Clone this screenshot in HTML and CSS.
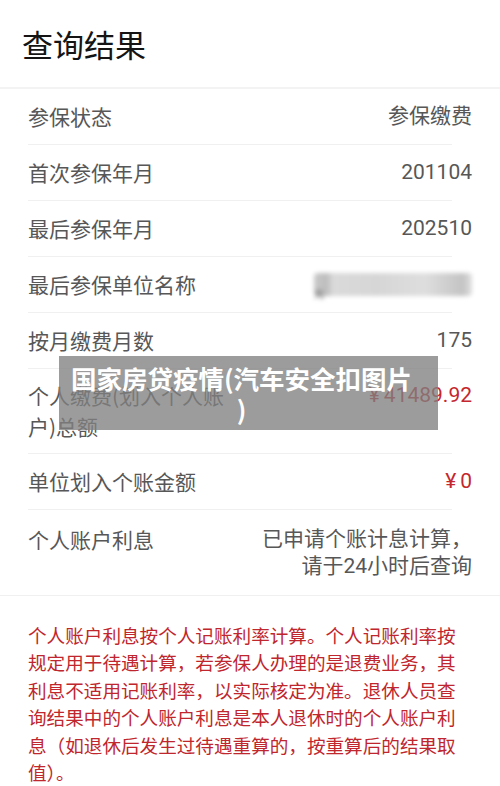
FILE: index.html
```html
<!DOCTYPE html>
<html lang="zh-CN">
<head>
    <meta charset="UTF-8">
    <meta name="viewport" content="width=device-width, initial-scale=1.0">
    <title>查询结果</title>
    <link rel="stylesheet" href="styles.css">
</head>
<body>

    <!-- header -->
    <div class="head">
        <p class="title">查询结果</p>
    </div>

    <!-- result rows -->
    <div class="list">
        <div class="row">
            <span class="label">参保状态</span>
            <span class="value">参保缴费</span>
        </div>
        <div class="row">
            <span class="label">首次参保年月</span>
            <span class="value">201104</span>
        </div>
        <div class="row">
            <span class="label">最后参保年月</span>
            <span class="value">202510</span>
        </div>
        <div class="row">
            <span class="label">最后参保单位名称</span>
            <span class="value"><span class="blur"><span class="blur-ch">元</span></span></span>
        </div>
        <div class="row">
            <span class="label">按月缴费月数</span>
            <span class="value">175</span>
        </div>
        <div class="row tall">
            <span class="label narrow">个人缴费(划入个人账户)总额</span>
            <span class="value red"><span class="yen">¥</span>41489.92</span>
        </div>
        <div class="row">
            <span class="label">单位划入个账金额</span>
            <span class="value red"><span class="yen">¥</span>0</span>
        </div>
        <div class="row last">
            <span class="label">个人账户利息</span>
            <span class="value multi">已申请个账计息计算，请于24小时后查询</span>
        </div>
    </div>

    <!-- note -->
    <div class="note">
        <p>个人账户利息按个人记账利率计算。个人记账利率按规定用于待遇计算，若参保人办理的是退费业务，其利息不适用记账利率，以实际核定为准。退休人员查询结果中的个人账户利息是本人退休时的个人账户利息（如退休后发生过待遇重算的，按重算后的结果取值）。</p>
    </div>

    <!-- caption over the picture -->
    <div class="caption">国家房贷疫情(汽车安全扣图片)</div>

</body>
</html>
```

FILE: styles.css
```css
body{
  margin: 0;
  background-color: #fff;
  font-family: Roboto, "Noto Sans CJK SC", sans-serif;
  position: relative;
}

p{
  margin: 0;
}

.head{
  height: 87px;
  display: flex;
  align-items: center;
  padding-left: 22px;
  border-bottom: 2px solid #f3f3f3;
}

.title{
  font-family: "Noto Sans CJK SC", sans-serif;
  font-size: 31px;
  color: #141414;
  line-height: 1;
}

.list{
  padding: 0 48px 0 28px;
  border-bottom: 1px solid #f0f0f0;
}

.row{
  display: flex;
  justify-content: space-between;
  align-items: flex-start;
  padding: 12px 0;
  border-bottom: 1px solid #f0f0f0;
  font-size: 21px;
  line-height: 31px;
  color: #575757;
}

.row.tall{
  padding: 11px 0;
}

.row.last{
  border-bottom: none;
  padding: 14px 0 15px;
}

.label{
  font-family: "Noto Sans CJK SC", sans-serif;
}

.label.narrow{
  width: 205px;
}

.value{
  margin-right: -20px;
  text-align: right;
}

.value.red{
  color: #c4272e;
}

.yen{
  margin-right: 4px;
}

.value.multi{
  width: 210px;
  line-height: 27px;
  padding-top: 2px;
}

.blur{
  display: block;
  position: relative;
  width: 158px;
  height: 23px;
  margin-top: 4px;
  background: linear-gradient(90deg, #c9c9c9 0, #bdbdbd 8%, #dadada 12%, #d6d6d6 40%, #dedede 70%, #c4c4c4 94%, #e0e0e0 100%);
  filter: blur(2px);
  border-radius: 4px;
}

.blur-ch{
  position: absolute;
  left: 0;
  bottom: -4px;
  font-size: 10px;
  line-height: 10px;
  color: #555;
}

.note{
  padding: 25px 42px 20px 28px;
}

.note p{
  font-family: "Noto Sans CJK SC", sans-serif;
  font-size: 18.6px;
  line-height: 27.4px;
  color: #c0262d;
}

.caption{
  position: absolute;
  left: 59px;
  top: 356px;
  width: 379px;
  height: 74px;
  box-sizing: border-box;
  padding: 6px 25px 6px 11px;
  background-color: rgba(128, 128, 128, 0.78);
  color: #fff;
  font-family: "Noto Sans CJK SC", sans-serif;
  font-weight: bold;
  font-size: 25.5px;
  line-height: 31px;
  text-align: center;
  line-break: anywhere;
}
```
